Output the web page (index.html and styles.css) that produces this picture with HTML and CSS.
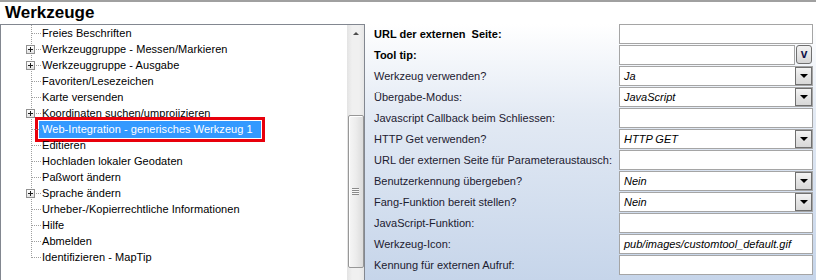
FILE: index.html
```html
<!DOCTYPE html>
<html lang="de">
<head>
<meta charset="utf-8">
<title>Werkzeuge</title>
<link rel="stylesheet" href="styles.css">
</head>
<body>
<div class="rule"></div>
<div class="title">Werkzeuge</div>
<div class="main">
  <div class="tree">
    <div class="tree-body">
      <ul class="nodes">
        <li class="node"><span class="gutter"></span><span class="label">Freies Beschriften</span></li>
        <li class="node"><span class="gutter"><span class="expander"></span></span><span class="label">Werkzeuggruppe - Messen/Markieren</span></li>
        <li class="node"><span class="gutter"><span class="expander"></span></span><span class="label">Werkzeuggruppe - Ausgabe</span></li>
        <li class="node"><span class="gutter"></span><span class="label">Favoriten/Lesezeichen</span></li>
        <li class="node"><span class="gutter"></span><span class="label">Karte versenden</span></li>
        <li class="node"><span class="gutter"><span class="expander"></span></span><span class="label">Koordinaten suchen/umprojizieren</span></li>
        <li class="node"><span class="gutter"></span><span class="label selected">Web-Integration - generisches Werkzeug 1</span></li>
        <li class="node"><span class="gutter"></span><span class="label">Editieren</span></li>
        <li class="node"><span class="gutter"></span><span class="label">Hochladen lokaler Geodaten</span></li>
        <li class="node"><span class="gutter"></span><span class="label">Paßwort ändern</span></li>
        <li class="node"><span class="gutter"><span class="expander"></span></span><span class="label">Sprache ändern</span></li>
        <li class="node"><span class="gutter"></span><span class="label">Urheber-/Kopierrechtliche Informationen</span></li>
        <li class="node"><span class="gutter"></span><span class="label">Hilfe</span></li>
        <li class="node"><span class="gutter"></span><span class="label">Abmelden</span></li>
        <li class="node"><span class="gutter"></span><span class="label">Identifizieren - MapTip</span></li>
      </ul>
    </div>
    <div class="scrollbar">
      <div class="sb-up"><span class="tri-up"></span></div>
      <div class="thumb"><span class="grip"></span></div>
    </div>
  </div>
  <div class="panel">
    <div class="form">
      <div class="lbl bold">URL der externen&nbsp; Seite:</div>
      <div class="field"></div>

      <div class="lbl bold">Tool tip:</div>
      <div class="field-row"><div class="field short"></div><div class="btn-v">v</div></div>

      <div class="lbl">Werkzeug verwenden?</div>
      <div class="field select"><span class="val">Ja</span><span class="drop"><span class="tri-down"></span></span></div>

      <div class="lbl">Übergabe-Modus:</div>
      <div class="field select"><span class="val">JavaScript</span><span class="drop"><span class="tri-down"></span></span></div>

      <div class="lbl">Javascript Callback beim Schliessen:</div>
      <div class="field"></div>

      <div class="lbl">HTTP Get verwenden?</div>
      <div class="field select"><span class="val">HTTP GET</span><span class="drop"><span class="tri-down"></span></span></div>

      <div class="lbl">URL der externen Seite für Parameteraustausch:</div>
      <div class="field"></div>

      <div class="lbl">Benutzerkennung übergeben?</div>
      <div class="field select"><span class="val">Nein</span><span class="drop"><span class="tri-down"></span></span></div>

      <div class="lbl">Fang-Funktion bereit stellen?</div>
      <div class="field select"><span class="val">Nein</span><span class="drop"><span class="tri-down"></span></span></div>

      <div class="lbl">JavaScript-Funktion:</div>
      <div class="field"></div>

      <div class="lbl">Werkzeug-Icon:</div>
      <div class="field"><span class="val">pub/images/customtool_default.gif</span></div>

      <div class="lbl">Kennung für externen Aufruf:</div>
      <div class="field"></div>
    </div>
  </div>
</div>
</body>
</html>
```
FILE: styles.css
```css
html, body {
  margin: 0;
  padding: 0;
  background: #ffffff;
  overflow: hidden;
}
body {
  width: 816px;
  height: 280px;
  font-family: "Liberation Sans", Arial, sans-serif;
  font-size: 11px;
  color: #000;
}
.rule {
  height: 2px;
  background: #a0a0a0;
}
.title {
  height: 22px;
  line-height: 22px;
  padding-left: 5px;
  font-size: 17px;
  font-weight: bold;
  color: #000;
}
.main {
  display: flex;
  height: 256px;
}
.tree {
  width: 365px;
  box-sizing: border-box;
  border: 1px solid #828790;
  border-bottom: none;
  display: flex;
  flex: none;
  background: #fff;
}
.tree-body {
  flex: 1;
}
.nodes {
  list-style: none;
  margin: 0;
  padding: 0;
  background-image: repeating-linear-gradient(to bottom, #a0a0a0 0 1px, transparent 1px 2px);
  background-size: 1px 233px;
  background-position: 30px 0;
  background-repeat: no-repeat;
}
.node {
  height: 16px;
  display: flex;
  align-items: center;
}
.gutter {
  width: 38px;
  height: 16px;
  flex: none;
  position: relative;
  display: flex;
  align-items: center;
}
.gutter::before {
  content: "";
  position: absolute;
  left: 31px;
  top: 8px;
  width: 10px;
  height: 1px;
  background-image: repeating-linear-gradient(to right, #a0a0a0 0 1px, transparent 1px 2px);
}
.expander {
  position: relative;
  margin-left: 25px;
  width: 9px;
  height: 9px;
  box-sizing: border-box;
  border: 1px solid #919191;
  background: linear-gradient(#ffffff, #e2e2e2);
}
.expander::before {
  content: "";
  position: absolute;
  left: 1px;
  top: 3px;
  width: 5px;
  height: 1px;
  background: #1e1e1e;
}
.expander::after {
  content: "";
  position: absolute;
  left: 3px;
  top: 1px;
  width: 1px;
  height: 5px;
  background: #1e1e1e;
}
.label {
  height: 16px;
  line-height: 16px;
  padding: 0 3px;
  white-space: nowrap;
  letter-spacing: 0.05px;
}
.label.selected {
  height: 17px;
  line-height: 17px;
  padding-right: 8px;
  background: #3399ff;
  color: #fff;
  outline: 3px solid #e8000c;
  outline-offset: 1px;
}
.scrollbar {
  width: 17px;
  flex: none;
  display: flex;
  flex-direction: column;
  align-items: center;
  background: linear-gradient(to right, #e3e3e3, #f0f0f0 30%, #f0f0f0 70%, #e6e6e6);
}
.sb-up {
  width: 17px;
  height: 17px;
  display: flex;
  align-items: center;
  justify-content: center;
}
.tri-up {
  width: 0;
  height: 0;
  border-left: 3px solid transparent;
  border-right: 3px solid transparent;
  border-bottom: 3px solid #4d4d4d;
}
.thumb {
  margin-top: 73px;
  width: 16px;
  height: 153px;
  box-sizing: border-box;
  border: 1px solid #979797;
  border-radius: 2px;
  background: linear-gradient(to right, #f6f6f6, #ececec 50%, #dcdcdc);
  box-shadow: inset 1px 1px 0 #fff;
  display: flex;
  align-items: center;
  justify-content: center;
}
.grip {
  width: 7px;
  height: 7px;
  background-image: repeating-linear-gradient(to bottom, #8a8a8a 0 1px, #f8f8f8 1px 2px);
}
.panel {
  flex: 1;
  background: linear-gradient(#ffffff, #e3eaf4 35%, #c6d5ea);
  padding-left: 9px;
}
.form {
  display: grid;
  grid-template-columns: 245px 194px;
  grid-auto-rows: 20px;
  row-gap: 1px;
}
.lbl {
  align-self: center;
  color: #1c2030;
  white-space: nowrap;
}
.lbl.bold {
  font-weight: bold;
  color: #000;
}
.field {
  box-sizing: border-box;
  height: 20px;
  border: 1px solid #a5a5a5;
  background: #fff;
  display: flex;
  align-items: center;
}
.field-row {
  display: flex;
  align-items: flex-start;
}
.field.short {
  width: 176px;
}
.btn-v {
  margin-left: 1px;
  width: 16px;
  height: 19px;
  box-sizing: border-box;
  border: 1px solid #707070;
  border-radius: 3px;
  background: linear-gradient(#f2f2f2, #e6e6e6 50%, #d6d6d6);
  font-weight: bold;
  font-size: 12px;
  line-height: 16px;
  text-align: center;
  color: #14144a;
}
.val {
  flex: 1;
  padding-left: 4px;
  font-style: italic;
  color: #000;
  white-space: nowrap;
}
.drop {
  width: 17px;
  height: 18px;
  box-sizing: border-box;
  border: 1px solid #707070;
  background: linear-gradient(#f4f4f4, #e4e4e4 50%, #d8d8d8);
  display: flex;
  align-items: center;
  justify-content: center;
}
.tri-down {
  width: 0;
  height: 0;
  border-left: 4px solid transparent;
  border-right: 4px solid transparent;
  border-top: 4px solid #000;
}
```
